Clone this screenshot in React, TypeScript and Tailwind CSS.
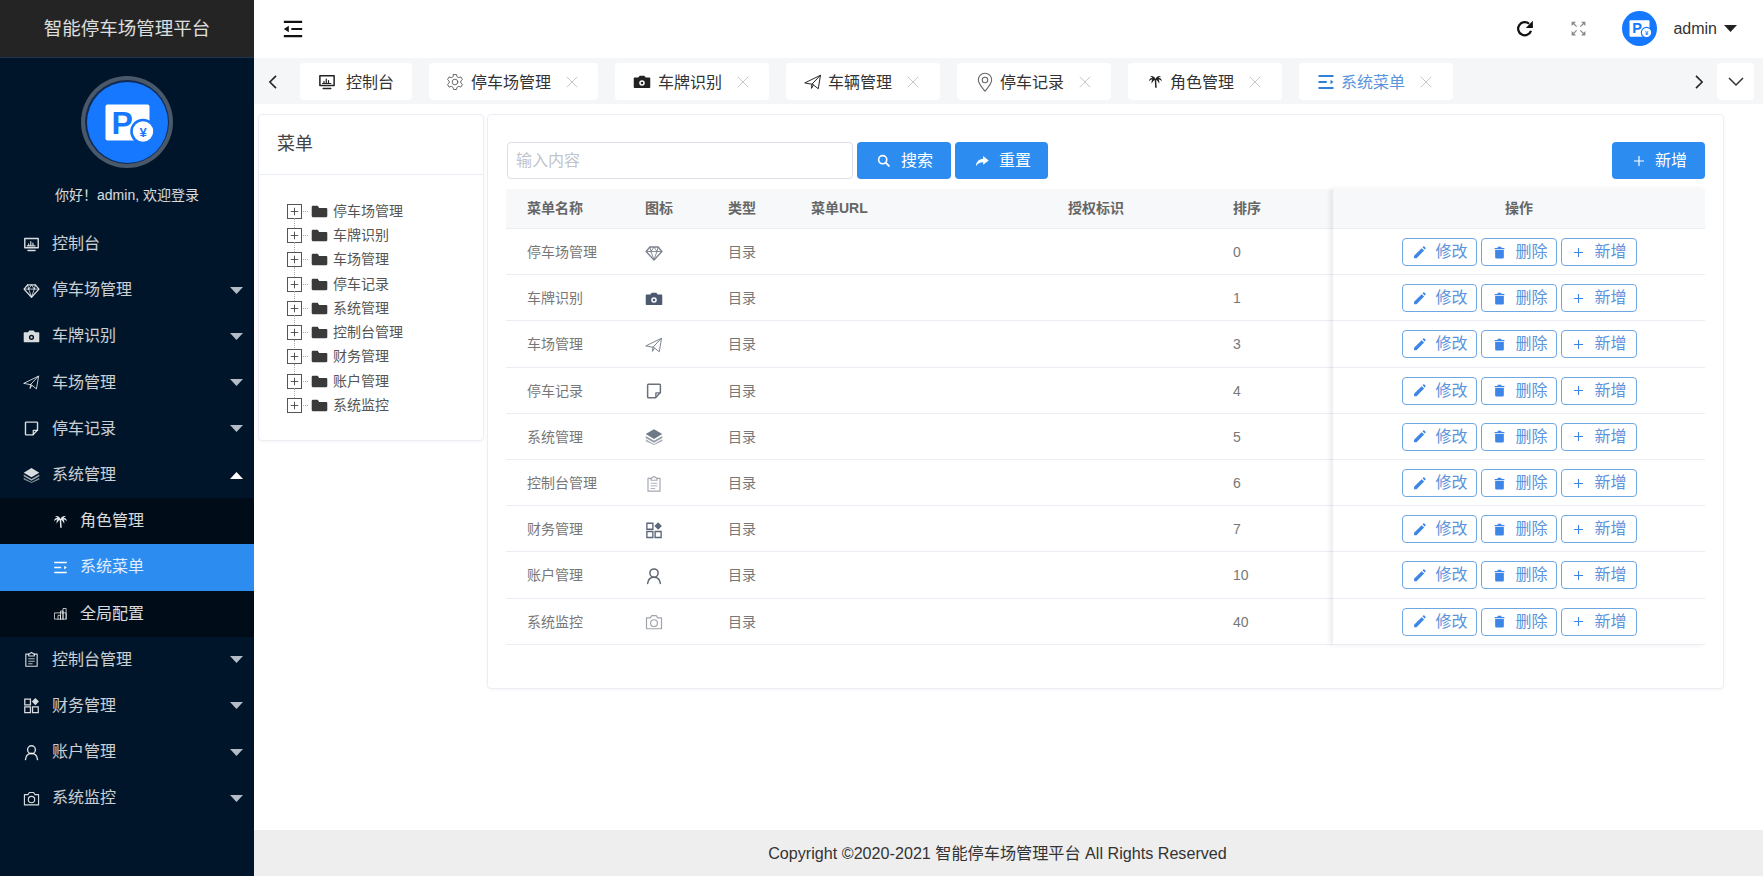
import React from 'react';

type IP = { className?: string };
const S = ({ className, children }: IP & { children: React.ReactNode }) => (
  <svg viewBox="0 0 24 24" fill="none" stroke="currentColor" strokeWidth="1.6" strokeLinejoin="round" strokeLinecap="round" className={className}>{children}</svg>
);
const Monitor = (p: IP) => <S {...p}><path d="M2.500 3.500h19v13h-19z" strokeWidth="2" /><path d="M7 20.500h10" strokeWidth="2" /><path d="M8 14v-3M11 14V8M14 14v-4M17 14h-11" strokeWidth="1.600" /></S>;
const Gem = (p: IP) => <S {...p}><path d="M6.500 4h11L22.500 10 12 21.500 1.500 10z" strokeWidth="1.800" /><path d="M2 10h20M8 10l4 11 4-11M6.500 4 8 10l4-6 4 6 1.500-6" strokeWidth="1.200" /></S>;
const CamFill = (p: IP) => (
  <svg viewBox="0 0 24 24" className={p.className}><path fill="currentColor" fillRule="evenodd" d="M2 6h5l2-2.500h6L17 6h5a1 1 0 0 1 1 1v12a1 1 0 0 1-1 1H2a1 1 0 0 1-1-1V7a1 1 0 0 1 1-1zm10 3.500a3.700 3.700 0 1 0 0 7.400 3.700 3.700 0 0 0 0-7.400zm0 2a1.700 1.700 0 1 1 0 3.400 1.700 1.700 0 0 1 0-3.400z" /></svg>
);
const Send = (p: IP) => <S {...p}><path d="M1.500 13 22 3l-3 18-7-5.500z" strokeWidth="1.300" /><path d="M22 3 10.500 15l-.5 5.500 2.500-4.500" strokeWidth="1.300" /></S>;
const Note = (p: IP) => <S {...p}><path d="M4.500 3h15a1 1 0 0 1 1 1v10l-6.500 7H4.500a1 1 0 0 1-1-1V4a1 1 0 0 1 1-1z" strokeWidth="2" /><path d="M20 14.500h-5.500V20.500" strokeWidth="1.800" /></S>;
const Layers = (p: IP) => (
  <svg viewBox="0 0 24 24" className={p.className}><path fill="currentColor" d="M12 1.500 23 8l-11 6.500L1 8z" /><path fill="currentColor" opacity=".75" d="M1 10.500l11 6.500 11-6.500v2.700l-11 6.300-11-6.300z" /><path fill="currentColor" opacity=".6" d="M1 15l11 6.300L23 15v2.700l-11 5-11-5z" /></svg>
);
const Palm = (p: IP) => (
  <svg viewBox="0 0 24 24" className={p.className}><path fill="currentColor" d="M12 8C10.500 4 7 2 3 3.500c2.500.5 3.500 1.500 4 2.500C4 6 2 8 1.500 11.500 3.500 9.500 5 8.800 7 8.800 5.500 10.500 5.500 13 6 15.500c1-3 2.800-5 4.800-6l.7 12.500h2.500L13 9.500c2 1 3.800 3 4.800 6 .5-2.500.5-5-1-6.700 2 0 3.500.7 5.500 2.700C21.800 8 20 6 17 6c.5-1 1.500-2 4-2.500C17 2 13.500 4 12 8z" /></svg>
);
const MenuLines = (p: IP) => (
  <svg viewBox="0 0 24 24" className={p.className}><path fill="none" stroke="currentColor" strokeWidth="2.600" d="M2 4h20M2 12h11M2 20h20" /><path fill="currentColor" d="M18 9l4 3-4 3z" /></svg>
);
const Collapse = (p: IP) => (
  <svg viewBox="0 0 24 24" className={p.className}><path fill="none" stroke="currentColor" strokeWidth="2.600" d="M1 3.500h22M10 12h13M1 20.500h22" /><path fill="currentColor" d="M7 8v8l-6-4z" /></svg>
);
const Config = (p: IP) => <S {...p}><path d="M3 11h18v10H3z" /><path d="M8 21v-6h4v6M12 21V8h4v13M16 21V4h5v17" /></S>;
const Clip = (p: IP) => <S {...p}><path d="M8 4.500H4v17h16v-17h-4" /><path d="M8 7V4.500l4-2.500 4 2.500V7z" /><path d="M8 11h8M8 14.500h8M8 18h5" strokeWidth="1.200" /></S>;
const Apps = (p: IP) => (
  <svg viewBox="0 0 24 24" className={p.className}><g fill="none" stroke="currentColor" strokeWidth="1.800"><path d="M2.500 3h8v8h-8zM2.500 14h8v8h-8zM13.500 14h8v8h-8z" /></g><path fill="currentColor" d="M17.500 1.500l5 5-5 5-5-5z" /></svg>
);
const User = (p: IP) => <S {...p}><circle cx="12" cy="8" r="5.500" strokeWidth="2" /><path d="M3.500 22c.5-5 3.500-8.500 8.500-8.500S20 17 20.500 22" strokeWidth="2" /></S>;
const CamLine = (p: IP) => <S {...p}><path d="M2 6.500h5L9 3.500h6l2 3h5v14.500H2z" /><circle cx="12" cy="13.500" r="4.500" /></S>;
const Gear = (p: IP) => <S {...p}><path d="M10 2h4l.7 3 2.300 1.200 2.900-1 2 3.500-2.200 2 .1 2.600 2.100 2-2 3.500-2.900-1-2.300 1.200-.7 3h-4l-.7-3L7 17.800l-2.900 1-2-3.500 2.200-2-.1-2.600-2.100-2 2-3.500 2.900 1L9.300 5z" strokeWidth="1.300" /><circle cx="12" cy="12" r="3.800" strokeWidth="1.300" /></S>;
const Pin = (p: IP) => <S {...p}><path d="M12 23C7 17 4 13.500 4 9.500a8 8 0 0 1 16 0c0 4-3 7.500-8 13.500z" strokeWidth="1.300" /><circle cx="12" cy="9.500" r="3.300" strokeWidth="1.300" /></S>;
const Close = (p: IP) => <S {...p}><path d="M2 2l20 20M22 2 2 22" strokeWidth="2" /></S>;
const Folder = (p: IP) => (
  <svg viewBox="0 0 24 24" className={p.className}><path fill="currentColor" d="M1 5.500a1.500 1.500 0 0 1 1.500-1.500h7l2 3h10A1.500 1.500 0 0 1 23 8.500v10a1.500 1.500 0 0 1-1.500 1.500h-19A1.500 1.500 0 0 1 1 18.500z" /></svg>
);
const Search = (p: IP) => <S {...p}><circle cx="10.500" cy="10.500" r="7.500" strokeWidth="3" /><path d="m16 16 6 6" strokeWidth="3.400" /></S>;
const Share = (p: IP) => (
  <svg viewBox="0 0 24 24" className={p.className}><path fill="currentColor" d="M14 3.500 23.500 11 14 18.500V14C8.500 14 4.500 16 1.500 21c.7-7.500 5-12 12.500-12.700z" /></svg>
);
const Plus = (p: IP) => <S {...p}><path d="M12 2v20M2 12h20" strokeWidth="2.400" strokeLinecap="butt" /></S>;
const Pencil = (p: IP) => (
  <svg viewBox="0 0 24 24" className={p.className}><path fill="currentColor" d="M2 18 16 4l4.500 4.500-14 14H2zM17.500 2.500 19 1a1.500 1.500 0 0 1 2 0l2 2a1.500 1.500 0 0 1 0 2l-1.500 1.500z" /></svg>
);
const Trash = (p: IP) => (
  <svg viewBox="0 0 24 24" className={p.className}><path fill="currentColor" d="M4 7.500h16V21a2 2 0 0 1-2 2H6a2 2 0 0 1-2-2zM3 3.500h5.500V1.500h7v2H21v2.500H3z" /></svg>
);
const Refresh = (p: IP) => (
  <svg viewBox="0 0 24 24" className={p.className}><path fill="none" stroke="currentColor" strokeWidth="3" d="M20 14.500A8.800 8.800 0 1 1 17.500 5" /><path fill="currentColor" d="M22.500 1v9.500H13z" /></svg>
);
const Expand = (p: IP) => (
  <svg viewBox="0 0 24 24" className={p.className}><g fill="none" stroke="currentColor" strokeWidth="1.800"><path d="M4 4l5 5M20 4l-5 5M4 20l5-5M20 20l-5-5" /></g><path fill="currentColor" d="M1 1h7L1 8zM23 1h-7l7 7zM1 23h7l-7-7zM23 23h-7l7-7z" /></svg>
);
const Logo = ({ className }: IP) => (
  <svg viewBox="0 0 81 81" className={className}>
    <rect x="18.500" y="22.500" width="44" height="36" rx="2" fill="#fff" />
    <text x="24.500" y="51.500" fontSize="32" fontWeight="700" fill="#1677ff" style={{ fontFamily: 'Liberation Sans' }}>P</text>
    <circle cx="56" cy="49.500" r="11.500" fill="#fff" stroke="#1677ff" strokeWidth="2.600" />
    <text x="56" y="54.500" fontSize="13" fontWeight="700" textAnchor="middle" fill="#1677ff" style={{ fontFamily: 'Liberation Sans' }}>¥</text>
  </svg>
);
const Caret = ({ up }: { up?: boolean }) => (
  <svg viewBox="0 0 13 7" className="ml-auto mr-[11px] w-[13px] h-[7px] text-[#b5bcc5]"><path fill={up ? '#fff' : 'currentColor'} d={up ? 'M6.500 0 13 7H0z' : 'M0 0h13L6.500 7z'} /></svg>
);

type Item = { t: string; I: (p: IP) => React.ReactElement; caret?: boolean; up?: boolean };
const menuTop: Item[] = [
  { t: '控制台', I: Monitor },
  { t: '停车场管理', I: Gem, caret: true },
  { t: '车牌识别', I: CamFill, caret: true },
  { t: '车场管理', I: Send, caret: true },
  { t: '停车记录', I: Note, caret: true },
  { t: '系统管理', I: Layers, caret: true, up: true },
];
const menuBottom: Item[] = [
  { t: '控制台管理', I: Clip, caret: true },
  { t: '财务管理', I: Apps, caret: true },
  { t: '账户管理', I: User, caret: true },
  { t: '系统监控', I: CamLine, caret: true },
];
const MenuRow = ({ t, I, caret, up }: Item) => (
  <div className="h-[46.200px] flex items-center pl-[23px] text-[16px] text-white/80">
    <I className="w-[17px] h-[17px] mr-[12px] text-white/85" />
    <span>{t}</span>
    {caret && <Caret up={up} />}
  </div>
);

const tabs = [
  { t: '控制台', I: Monitor, w: 'w-[112px] pl-[18px]', icon: 'w-[18px] h-[18px] mr-[10px]', close: false },
  { t: '停车场管理', I: Gear, w: 'w-[169px] pl-[17px]', icon: 'w-[18px] h-[18px] mr-[7px]', close: true },
  { t: '车牌识别', I: CamFill, w: 'w-[154px] pl-[18px]', icon: 'w-[18px] h-[18px] mr-[7px]', close: true },
  { t: '车辆管理', I: Send, w: 'w-[154px] pl-[18px]', icon: 'w-[18px] h-[18px] mr-[6px]', close: true },
  { t: '停车记录', I: Pin, w: 'w-[154px] pl-[18px]', icon: 'w-[20px] h-[20px] mr-[5px]', close: true },
  { t: '角色管理', I: Palm, w: 'w-[154px] pl-[20px]', icon: 'w-[15px] h-[15px] mr-[7px]', close: true },
  { t: '系统菜单', I: MenuLines, w: 'w-[154px] pl-[18px]', icon: 'w-[18px] h-[18px] mr-[6px]', close: true, active: true },
];

const tree = ['停车场管理', '车牌识别', '车场管理', '停车记录', '系统管理', '控制台管理', '财务管理', '账户管理', '系统监控'];

const rows: { n: string; I: (p: IP) => React.ReactElement; o: string; c: string }[] = [
  { n: '停车场管理', I: Gem, o: '0', c: 'text-[#7a818c]' },
  { n: '车牌识别', I: CamFill, o: '1', c: 'text-[#4c5a70]' },
  { n: '车场管理', I: Send, o: '3', c: 'text-[#7a818c]' },
  { n: '停车记录', I: Note, o: '4', c: 'text-[#6a717c]' },
  { n: '系统管理', I: Layers, o: '5', c: 'text-[#6f7885]' },
  { n: '控制台管理', I: Clip, o: '6', c: 'text-[#a5aab2]' },
  { n: '财务管理', I: Apps, o: '7', c: 'text-[#5b6678]' },
  { n: '账户管理', I: User, o: '10', c: 'text-[#5f6670]' },
  { n: '系统监控', I: CamLine, o: '40', c: 'text-[#a0a5ac]' },
];

const RowBtn = ({ I, t, w, icon, gap, pl }: { I: (p: IP) => React.ReactElement; t: string; w: string; icon: string; gap: string; pl: string }) => (
  <div className={`${w} ${pl} h-[28px] flex items-center border border-[#6fa8e0] rounded-[4px] text-[16px] text-[#5b94dc] bg-white`}>
    <I className={`${icon} ${gap} text-[#3d85e6]`} />
    <span>{t}</span>
  </div>
);

const TopBtn = ({ I, t, w, icon, gap, pl }: { I: (p: IP) => React.ReactElement; t: string; w: string; icon: string; gap: string; pl: string }) => (
  <div className={`${w} ${pl} h-[37px] flex items-center bg-[#2d8cf0] rounded-[4px] text-white text-[16px]`}>
    <I className={`${icon} ${gap}`} />
    <span>{t}</span>
  </div>
);

export default function App() {
  return (
    <div className="w-[1763px] h-[876px] flex overflow-hidden bg-white [font-family:'Liberation_Sans','Noto_Sans_CJK_SC',sans-serif]">
      <aside className="w-[254px] shrink-0 bg-[#001529] flex flex-col">
        <div className="h-[58px] bg-[#242424] border-b border-[#1f3350] flex items-center justify-center text-[18.500px] text-white/85">智能停车场管理平台</div>
        <div className="h-[163px] flex flex-col items-center pt-[18px]">
          <div className="w-[92px] h-[92px] rounded-full bg-[#4a596a] flex items-center justify-center">
            <div className="w-[84px] h-[84px] rounded-full bg-[#102a52] flex items-center justify-center">
              <div className="w-[81px] h-[81px] rounded-full bg-[#1677ff]"><Logo className="w-full h-full" /></div>
            </div>
          </div>
          <div className="mt-[17px] text-[14px] text-white/85 leading-[20px]">你好！admin, 欢迎登录</div>
        </div>
        {menuTop.map((m) => <MenuRow key={m.t} {...m} />)}
        <div className="bg-[#000c17]">
          <div className="h-[46.200px] flex items-center pl-[53px] text-[16px] text-white/85">
            <Palm className="w-[15px] h-[15px] mr-[12px] text-white/90" />角色管理
          </div>
          <div className="h-[46.200px] flex items-center pl-[53px] text-[16px] text-white/85 bg-[#2d8cf0]">
            <MenuLines className="w-[15px] h-[15px] mr-[12px] text-white" />系统菜单
          </div>
          <div className="h-[46.200px] flex items-center pl-[53px] text-[16px] text-white/85">
            <Config className="w-[15px] h-[15px] mr-[12px] text-white/70" />全局配置
          </div>
        </div>
        {menuBottom.map((m) => <MenuRow key={m.t} {...m} />)}
      </aside>

      <div className="flex-1 min-w-0 flex flex-col">
        <header className="h-[58px] shrink-0 bg-white flex items-center pl-[29px] pb-[1px]">
          <Collapse className="w-[20px] h-[20px] text-[#111]" />
          <Refresh className="ml-auto w-[18px] h-[18px] text-[#111]" />
          <Expand className="ml-[37px] w-[15px] h-[15px] text-[#888]" />
          <div className="ml-[36px] w-[35px] h-[35px] rounded-full bg-[#1677ff] overflow-hidden"><Logo className="w-full h-full scale-[1.050]" /></div>
          <span className="ml-[16px] text-[16px] text-[#333]">admin</span>
          <svg viewBox="0 0 13 7" className="ml-[7px] mr-[26px] w-[13px] h-[7px]"><path fill="#222" d="M0 0h13L6.500 7z" /></svg>
        </header>

        <div className="h-[46px] shrink-0 bg-[#f4f6f8] flex items-center pt-[1px]">
          <div className="w-[46px] flex justify-center">
            <svg viewBox="0 0 10 16" className="w-[9px] h-[14px] mr-[10px]"><path d="M9 1 2 8l7 7" fill="none" stroke="#222" strokeWidth="1.800" /></svg>
          </div>
          <div className="flex gap-[17px]">
            {tabs.map((tb) => (
              <div key={tb.t} className={`${tb.w} h-[37px] bg-white rounded-[4px] flex items-center text-[16px] ${tb.active ? 'text-[#5b94dc]' : 'text-[#333]'}`}>
                <tb.I className={`shrink-0 ${tb.icon} ${tb.active ? 'text-[#2f80d8]' : tb.t === '停车场管理' || tb.t === '停车记录' ? 'text-[#666]' : 'text-[#222]'}`} />
                <span className="pt-[2px]">{tb.t}</span>
                {tb.close && <Close className="ml-[15px] w-[12px] h-[12px] text-[#c8c8c8]" />}
              </div>
            ))}
          </div>
          <svg viewBox="0 0 10 16" className="ml-auto w-[9px] h-[14px]"><path d="m1 1 7 7-7 7" fill="none" stroke="#222" strokeWidth="1.800" /></svg>
          <div className="ml-[13px] mr-[9px] w-[37px] h-[37px] bg-white rounded-[4px] flex items-center justify-center">
            <svg viewBox="0 0 16 10" className="w-[16px] h-[10px]"><path d="m1 1 7 7 7-7" fill="none" stroke="#333" strokeWidth="1.500" /></svg>
          </div>
        </div>

        <main className="flex-1 flex items-start gap-[4px] pt-[10px] pl-[4px] pr-[39px]">
          <section className="w-[226px] h-[327px] shrink-0 bg-white border border-[#ebeef5] rounded-[4px] shadow-[0_1px_3px_rgba(0,0,0,0.04)]">
            <div className="h-[60px] border-b border-[#ebeef5] flex items-center pl-[18px] text-[18px] text-[#444]">菜单</div>
            <div className="pt-[24px] pl-[28px]">
              {tree.map((t, i) => (
                <div key={t} className="h-[24.300px] flex items-center text-[14px] text-[#555]">
                  <div className="relative w-[15px] h-[15px] border-[1.500px] border-[#555] flex items-center justify-center text-[#444] shrink-0">
                    <Plus className="w-[9px] h-[9px]" />
                    {i < tree.length - 1 && <span className="absolute left-[5.500px] top-[13.500px] h-[10px] border-l border-dotted border-[#aaa]" />}
                  </div>
                  <span className="w-[5px] border-t border-dotted border-[#aaa] ml-[1px] mr-[3px]" />
                  <Folder className="w-[17px] h-[17px] text-[#3a3a3a] mr-[5px]" />
                  <span>{t}</span>
                </div>
              ))}
            </div>
          </section>

          <section className="flex-1 h-[575px] -ml-[1px] bg-white border border-[#ebeef5] rounded-[4px] shadow-[0_1px_3px_rgba(0,0,0,0.04)] pt-[27px] pl-[18px] pr-[18px]">
            <div className="flex items-center gap-[4px] pl-[1px]">
              <div className="w-[346px] h-[37px] border border-[#dcdfe6] rounded-[4px] flex items-center pl-[8px] text-[16px] text-[#c0c4cc]">输入内容</div>
              <TopBtn I={Search} t="搜索" w="w-[94px]" pl="pl-[20px]" icon="w-[13px] h-[13px]" gap="mr-[11px]" />
              <TopBtn I={Share} t="重置" w="w-[93px]" pl="pl-[20px]" icon="w-[14px] h-[14px]" gap="mr-[10px]" />
              <div className="ml-auto"><TopBtn I={Plus} t="新增" w="w-[93px]" pl="pl-[21px]" icon="w-[12px] h-[12px]" gap="mr-[10px]" /></div>
            </div>

            <div className="mt-[10px] flex text-[14px] text-[#777]">
              <div className="flex-1 min-w-0">
                <div className="h-[40px] bg-[#f7f8f9] border-b border-[#ebeef5] flex items-center font-bold text-[#666]">
                  <div className="w-[117px] pl-[21px]">菜单名称</div>
                  <div className="w-[84px] pl-[22px]">图标</div>
                  <div className="w-[83px] pl-[21px]">类型</div>
                  <div className="w-[256px] pl-[21px]">菜单URL</div>
                  <div className="w-[165px] pl-[22px]">授权标识</div>
                  <div className="pl-[22px]">排序</div>
                </div>
                {rows.map((r) => (
                  <div key={r.n} className="h-[46.200px] border-b border-[#ebeef5] flex items-center pt-[2px]">
                    <div className="w-[117px] pl-[21px]">{r.n}</div>
                    <div className="w-[84px] pl-[22px]"><r.I className={`w-[18px] h-[18px] ${r.c}`} /></div>
                    <div className="w-[83px] pl-[21px]">目录</div>
                    <div className="w-[256px]" />
                    <div className="w-[165px]" />
                    <div className="pl-[22px]">{r.o}</div>
                  </div>
                ))}
              </div>
              <div className="w-[372px] shrink-0 bg-white shadow-[-3px_0_5px_rgba(0,0,0,0.08)]">
                <div className="h-[40px] bg-[#f7f8f9] border-b border-[#ebeef5] flex items-center justify-center font-bold text-[#666]">操作</div>
                {rows.map((r) => (
                  <div key={r.n} className="h-[46.200px] border-b border-[#ebeef5] flex items-center justify-center gap-[4px] pt-[1px]">
                    <RowBtn I={Pencil} t="修改" w="w-[75px]" pl="pl-[10px]" icon="w-[13px] h-[13px]" gap="mr-[10px]" />
                    <RowBtn I={Trash} t="删除" w="w-[76px]" pl="pl-[11px]" icon="w-[13px] h-[13px]" gap="mr-[10px]" />
                    <RowBtn I={Plus} t="新增" w="w-[76px]" pl="pl-[11px]" icon="w-[11px] h-[11px]" gap="mr-[11px]" />
                  </div>
                ))}
              </div>
            </div>
          </section>
        </main>

        <footer className="h-[46px] shrink-0 bg-[#eeeeee] flex items-center justify-center pr-[22px] text-[16.150px] text-[#333]">
          Copyright ©2020-2021 智能停车场管理平台 All Rights Reserved
        </footer>
      </div>
    </div>
  );
}
